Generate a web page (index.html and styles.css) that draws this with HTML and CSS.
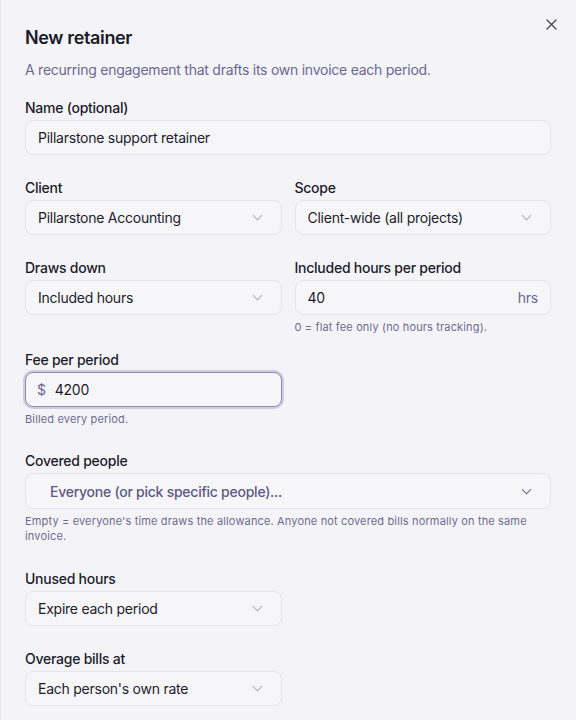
FILE: index.html
```html
<!DOCTYPE html>
<html lang="en">
<head>
<meta charset="utf-8">
<title>New retainer</title>
<link rel="stylesheet" href="styles.css">
</head>
<body>
<div class="dialog">
  <button class="close" aria-label="Close">
    <svg width="11" height="11" viewBox="0 0 11 11"><path d="M1 1L10 10M10 1L1 10" stroke="currentColor" stroke-width="1.4" stroke-linecap="round"/></svg>
  </button>
  <h1 class="title">New retainer</h1>
  <p class="subtitle">A recurring engagement that drafts its own invoice each period.</p>

  <div class="field field--first">
    <label class="label">Name (optional)</label>
    <div class="control"><span class="value">Pillarstone support retainer</span></div>
  </div>

  <div class="row">
    <div class="field">
      <label class="label">Client</label>
      <div class="control select"><span class="value">Pillarstone Accounting</span><span class="chev"></span></div>
    </div>
    <div class="field">
      <label class="label">Scope</label>
      <div class="control select"><span class="value">Client-wide (all projects)</span><span class="chev"></span></div>
    </div>
  </div>

  <div class="row">
    <div class="field">
      <label class="label">Draws down</label>
      <div class="control select"><span class="value">Included hours</span><span class="chev"></span></div>
    </div>
    <div class="field">
      <label class="label">Included hours per period</label>
      <div class="control"><span class="value">40</span><span class="suffix">hrs</span></div>
      <p class="hint">0 = flat fee only (no hours tracking).</p>
    </div>
  </div>

  <div class="row row--tight">
    <div class="field">
      <label class="label">Fee per period</label>
      <div class="control focused"><span class="prefix">$</span><span class="value">4200</span></div>
      <p class="hint">Billed every period.</p>
    </div>
  </div>

  <div class="field">
    <label class="label">Covered people</label>
    <div class="control select multi"><span class="placeholder">Everyone (or pick specific people)...</span><span class="chev chev--dark"></span></div>
    <p class="hint hint--wide">Empty = everyone's time draws the allowance. Anyone not covered bills normally on the same invoice.</p>
  </div>

  <div class="row row--spaced">
    <div class="field">
      <label class="label">Unused hours</label>
      <div class="control select"><span class="value">Expire each period</span><span class="chev"></span></div>
    </div>
  </div>

  <div class="row">
    <div class="field">
      <label class="label">Overage bills at</label>
      <div class="control select"><span class="value">Each person's own rate</span><span class="chev"></span></div>
    </div>
  </div>
</div>
</body>
</html>
```

FILE: styles.css
```css
* { box-sizing: border-box; }

html, body {
  margin: 0;
  padding: 0;
  background: #f4f4f8;
}

body {
  font-family: Inter, "Noto Sans", "Liberation Sans", sans-serif;
  color: #1d1c2a;
  width: 576px;
  height: 720px;
  overflow: hidden;
  letter-spacing: -0.25px;
}

.dialog {
  position: relative;
  padding: 26px 25px 0 24px;
  border-left: 1px solid #e7e6ee;
  min-height: 720px;
}

.close {
  position: absolute;
  top: 18px;
  right: 18px;
  width: 13px;
  height: 13px;
  padding: 1px;
  border: 0;
  background: none;
  color: #4b4960;
  display: flex;
  align-items: center;
  justify-content: center;
}

.title {
  margin: 0;
  font-size: 18px;
  line-height: 24px;
  font-weight: 600;
  letter-spacing: -0.35px;
  color: #1b1a28;
}

.subtitle {
  margin: 10px 0 0;
  font-size: 14px;
  line-height: 20px;
  color: #6b6791;
}

.field {
  display: flex;
  flex-direction: column;
  min-width: 0;
}

.field--first { margin-top: 18px; }

.row {
  display: grid;
  grid-template-columns: 1fr 1fr;
  column-gap: 13px;
  margin-top: 23px;
}

.row--tight { margin-top: 15px; }
.row--spaced { margin-top: 25px; }

.dialog > .field:not(.field--first) { margin-top: 24px; }

.label {
  font-size: 14px;
  line-height: 20px;
  font-weight: 500;
  color: #1d1c2a;
  margin-bottom: 2px;
}

.control {
  height: 35px;
  border: 1px solid #e5e4ed;
  border-radius: 8px;
  background: #f6f6f9;
  display: flex;
  align-items: center;
  padding: 0 12px;
  font-size: 14px;
  color: #1d1c2a;
}

.control.select { padding-right: 20px; }

.value {
  flex: 1;
  white-space: nowrap;
  overflow: hidden;
}

.suffix {
  color: #6b6791;
  font-size: 14px;
}

.prefix {
  color: #6b6791;
  margin-right: 9px;
  margin-left: -1px;
}

.focused {
  border: 1px solid #8f8bb1;
  box-shadow: 0 0 0 2px #cfcce0;
}

.chev {
  width: 7px;
  height: 7px;
  border-right: 1px solid #aeacc2;
  border-bottom: 1px solid #aeacc2;
  transform: rotate(45deg);
  margin-top: -4px;
  flex: none;
}

.chev--dark {
  border-color: #6b6791;
  border-width: 1.5px;
}

.multi {
  height: 36px;
  padding-left: 24px;
  padding-right: 24px;
}

.placeholder {
  flex: 1;
  color: #5d5983;
  font-weight: 500;
  font-size: 14px;
}

.hint {
  margin: 4px 0 0;
  font-size: 11px;
  line-height: 16px;
  color: #6e6a8f;
  letter-spacing: 0.15px;
}

.hint--wide {
  margin-top: 5px;
  line-height: 15px;
}
```
